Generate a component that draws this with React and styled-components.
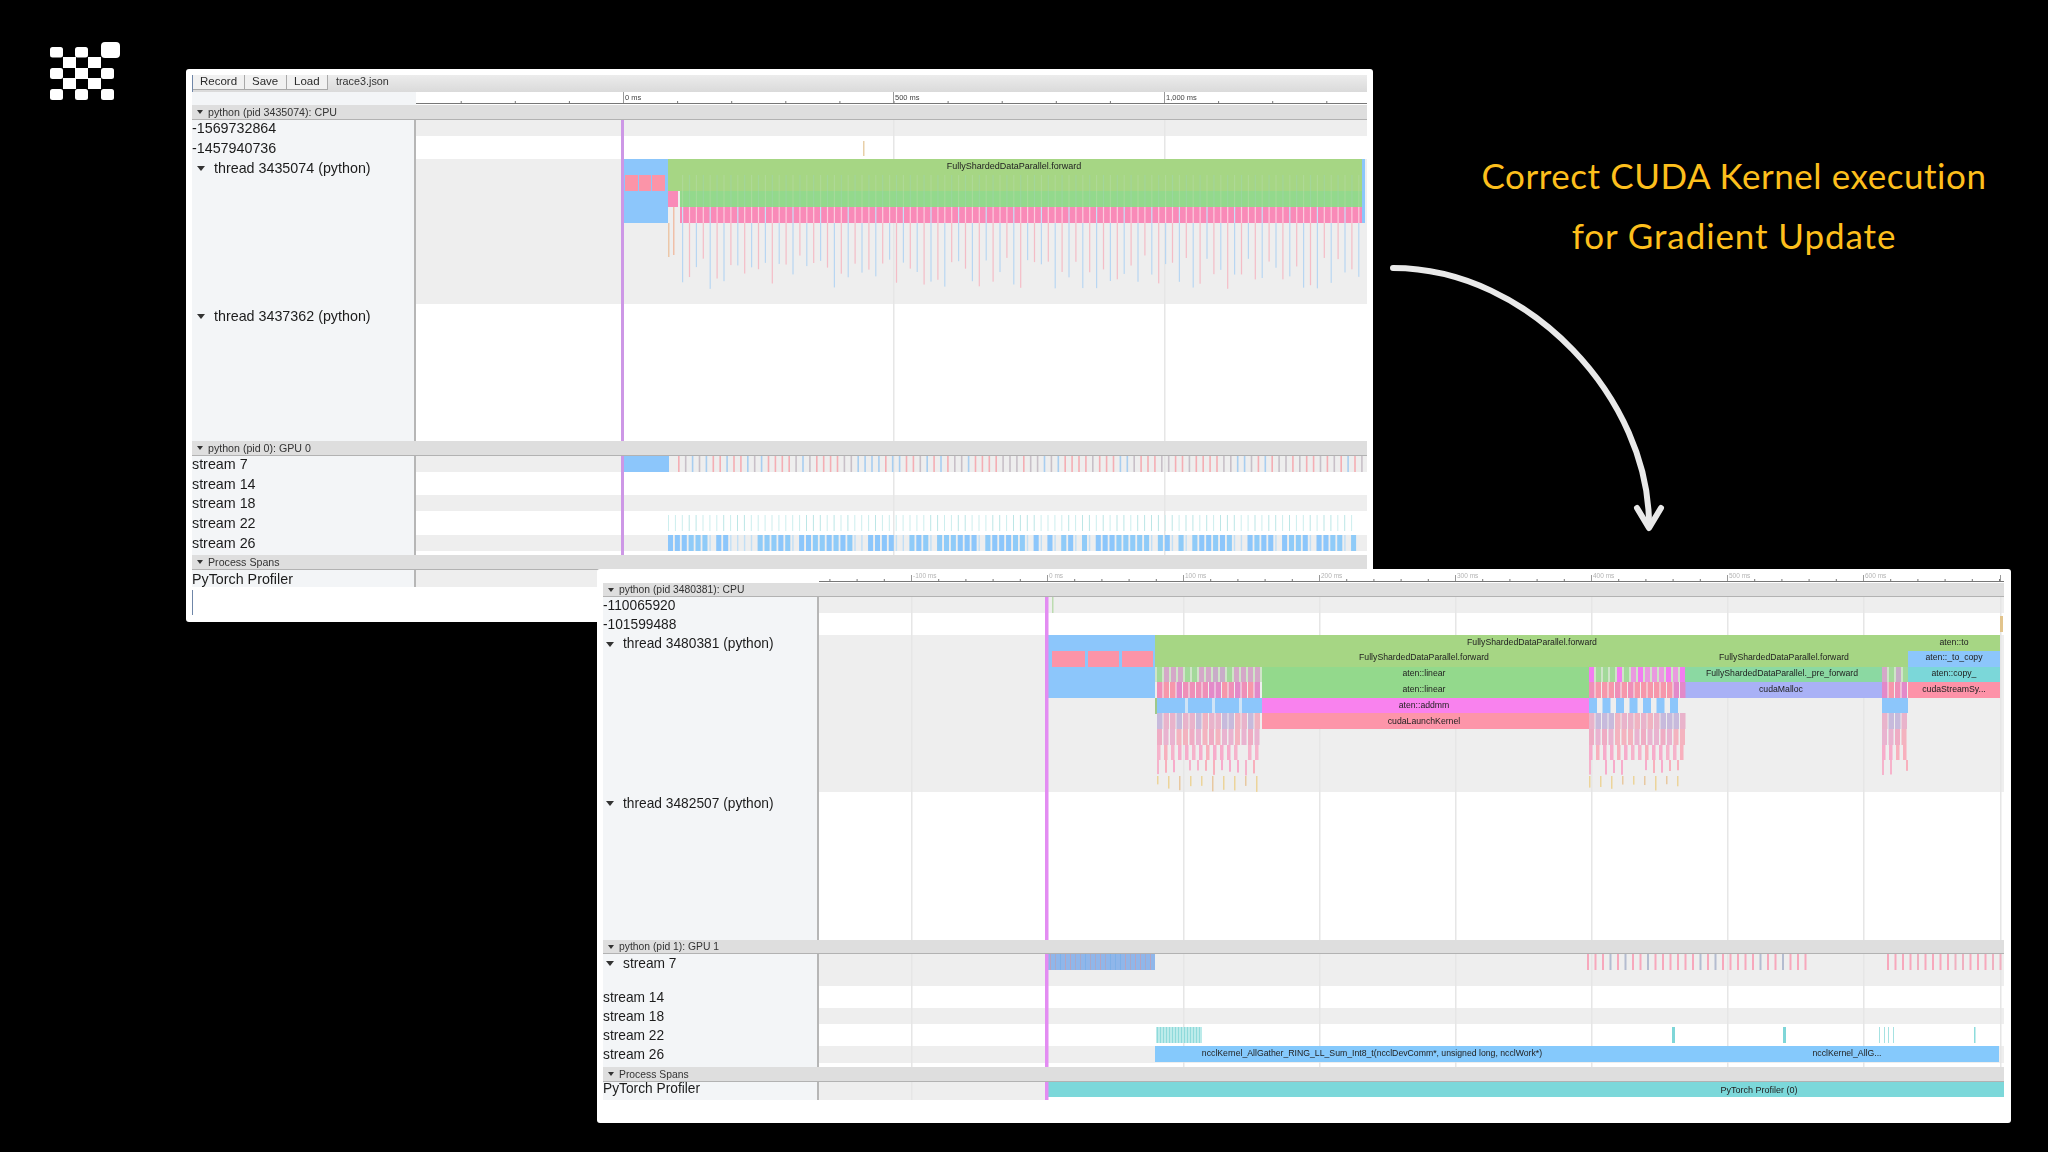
import React from "react";
import styled, { createGlobalStyle } from "styled-components";

const GlobalStyle = createGlobalStyle`
  html, body { margin: 0; padding: 0; background: #000; }
  body { font-family: "Liberation Sans", Arial, sans-serif; }
`;

const Stage = styled.div`
  position: relative;
  width: 2048px;
  height: 1152px;
  background: #000;
  overflow: hidden;
`;

const LogoArt = styled.svg`
  position: absolute;
  left: 50px;
  top: 42px;
`;

const ArrowArt = styled.svg`
  position: absolute;
  left: 1380px;
  top: 260px;
`;

const Caption = styled.div`
  position: absolute;
  left: 1434px;
  top: 145px;
  width: 600px;
  color: #fdbf1c;
  font-family: "Lato", "Open Sans", sans-serif;
  font-size: 35px;
  line-height: 60px;
  text-align: center;
`;

const CaptionLine = styled.div`
  white-space: nowrap;
  letter-spacing: ${(p) => p.$ls}px;
`;

const Window = styled.section`
  position: absolute;
  left: ${(p) => p.$left}px;
  top: ${(p) => p.$top}px;
  width: ${(p) => p.$width}px;
  height: ${(p) => p.$height}px;
  box-sizing: border-box;
  padding: ${(p) => p.$pad};
  background: #fff;
  border-radius: 3px;
  display: flex;
  flex-direction: column;
  overflow: hidden;
  filter: blur(0.45px);
`;

const Toolbar = styled.div`
  height: 17px;
  flex: none;
  display: flex;
  align-items: stretch;
  background: linear-gradient(#ececec, #dadada);
  border-left: 1px solid #6f86a8;
  font-size: 11.5px;
  color: #2b2b2b;
`;

const ToolButton = styled.div`
  width: ${(p) => p.$w}px;
  box-sizing: border-box;
  padding-left: ${(p) => p.$pad}px;
  height: 15px;
  line-height: 13px;
  background: #f1f1f1;
  border-right: 1px solid #a9a9a9;
  border-bottom: 1px solid #a9a9a9;
`;

const FileName = styled.div`
  padding-left: 8px;
  line-height: 13px;
  font-size: 10.8px;
  color: #333;
`;

const RulerRow = styled.div`
  height: ${(p) => p.$h}px;
  flex: none;
  display: flex;
`;

const RulerGutter = styled.div`
  width: ${(p) => p.$w}px;
  flex: none;
  background: ${(p) => p.$bg};
`;

const ProcessHeader = styled.div`
  height: ${(p) => p.$h}px;
  flex: none;
  box-sizing: border-box;
  display: flex;
  align-items: center;
  background: #dedede;
  border-bottom: 1px solid #b2b2b2;
  padding-left: 5px;
  font-size: ${(p) => p.$fs}px;
  color: #333;
  white-space: nowrap;
`;

const HeaderCaret = styled.span`
  width: 0;
  height: 0;
  margin-right: 5px;
  border-left: 3px solid transparent;
  border-right: 3px solid transparent;
  border-top: 4px solid #333;
`;

const Row = styled.div`
  height: ${(p) => p.$h}px;
  flex: none;
  display: flex;
`;

const RowLabel = styled.div`
  box-sizing: border-box;
  display: flex;
  align-items: center;
  height: ${(p) => p.$h}px;
  font-size: ${(p) => p.$fs}px;
  color: #1c1c1c;
  white-space: nowrap;
  padding-left: ${(p) => p.$indent}px;
`;

const LabelCell = styled.div`
  width: ${(p) => p.$w}px;
  flex: none;
  box-sizing: border-box;
  background: #f3f5f7;
  border-right: 2px solid #b6b6b6;
`;

const RowCaret = styled.span`
  width: 0;
  height: 0;
  flex: none;
  margin-right: 9px;
  margin-top: 1px;
  border-left: 4px solid transparent;
  border-right: 4px solid transparent;
  border-top: 5px solid #333;
`;

const TrackBox = styled.div`
  flex: 1;
  min-width: 0;
  background: ${(p) => (p.$shade ? "#eeeeee" : "#ffffff")};
`;

const TrackArt = styled.svg`
  display: block;
`;

const SliceLabel = styled.text`
  font-family: "Liberation Sans", Arial, sans-serif;
  font-size: ${(p) => p.$fs}px;
  fill: #222;
  text-anchor: middle;
`;

const TickLabel = styled.text`
  font-family: "Liberation Sans", Arial, sans-serif;
  font-size: ${(p) => p.$fs}px;
  fill: ${(p) => p.$fill};
`;

const InputCaret = styled.div`
  width: 1px;
  height: 25px;
  margin-top: 3px;
  background: #6f86a8;
`;

const rnd = (i) => {
  const v = Math.sin(i * 12.9898 + 4.1) * 43758.5453;
  return v - Math.floor(v);
};

const BLUE = "#8cc6fb";
const PINK = "#fb94a8";
const HOT = "#f98ab8";
const GREEN = "#a6d684";
const GREEN2 = "#93d98c";

function Stripes({ from, to, y, h, step = 7, w = 2, colors, seed = 1, skip = 0, opacity = 1, vary = 0 }) {
  const out = [];
  let n = 0;
  for (let x = from; x < to - w / 2; x += step, n++) {
    const r = rnd(seed * 31 + n);
    if (r < skip) continue;
    const c = colors[Math.floor(rnd(seed * 7 + n * 3) * colors.length)];
    const hh = vary ? h - rnd(seed + n * 5) * vary : h;
    out.push(<rect key={n} x={x} y={y} width={w} height={hh} fill={c} opacity={opacity} />);
  }
  return <>{out}</>;
}

function Track({ x0, w, top, h, grid, marker, markerW, markerColor, children }) {
  return (
    <TrackArt width={w} height={h} viewBox={`${x0} ${top} ${w} ${h}`}>
      {grid.map((g) => (
        <rect key={g} x={g} y={top} width={1.5} height={h} fill="#e6e6e6" />
      ))}
      {children}
      {marker && <rect x={marker} y={top} width={markerW} height={h} fill={markerColor} />}
    </TrackArt>
  );
}

function Ruler({ x0, w, h, majors, minorStep, labels, labelSize, labelFill, lineY, majorH }) {
  const ticks = [];
  for (let x = majors[0] - minorStep * 8; x < x0 + w; x += minorStep) {
    if (x >= x0) ticks.push(x);
  }
  return (
    <TrackArt width={w} height={h} viewBox={`${x0} 0 ${w} ${h}`}>
      <rect x={x0} y={lineY} width={w} height={1} fill="#777" />
      {ticks.map((x, i) => (
        <rect key={i} x={x} y={lineY - 2} width={1} height={3} fill="#777" />
      ))}
      {majors.map((x, i) => (
        <g key={x}>
          <rect x={x} y={lineY - majorH} width={1} height={majorH} fill="#999" />
          <TickLabel x={x + 2} y={lineY - 3} $fs={labelSize} $fill={labelFill}>{labels[i]}</TickLabel>
        </g>
      ))}
    </TrackArt>
  );
}

const LW1 = 224;
const TW1 = 951;
const X1 = 416;
const G1 = [893, 1164];

function Line1({ top, h, shade, label, caret, rowH, children, marker = true }) {
  return (
    <Row $h={h}>
      <LabelCell $w={LW1}>
        <RowLabel $h={rowH || h} $fs={14.3} $indent={caret ? 5 : 0}>
          {caret && <RowCaret />}
          {label}
        </RowLabel>
      </LabelCell>
      <TrackBox $shade={shade}>
        <Track x0={X1} w={TW1} top={top} h={h} grid={G1} marker={marker ? 621 : 0} markerW={3} markerColor="#cd97e6">
          {children}
        </Track>
      </TrackBox>
    </Row>
  );
}

const LW2 = 216;
const TW2 = 1185;
const X2 = 819;
const G2 = [911, 1183, 1319, 1455, 1591, 1727, 1863, 2000];

function Line2({ top, h, shade, label, caret, rowH, children }) {
  return (
    <Row $h={h}>
      <LabelCell $w={LW2}>
        <RowLabel $h={rowH || h} $fs={13.75} $indent={caret ? 3 : 0}>
          {caret && <RowCaret />}
          {label}
        </RowLabel>
      </LabelCell>
      <TrackBox $shade={shade}>
        <Track x0={X2} w={TW2} top={top} h={h} grid={G2} marker={1045} markerW={3.5} markerColor="#e38cf2">
          {children}
        </Track>
      </TrackBox>
    </Row>
  );
}

function Thread1() {
  const drops = [];
  let n = 0;
  for (let x = 682; x < 1360; x += 6.9, n++) {
    const blue = n % 2 === 0;
    const len = 32 + rnd(n + 3) * 34;
    drops.push(
      <g key={n}>
        <rect x={x} y={175} width={1.2} height={32} fill={blue ? "#b5dca8" : "#9fd6b0"} opacity={0.5} />
        <rect x={x} y={207} width={1.2} height={16} fill={n % 4 === 0 ? "#c8e0f8" : "#fcccde"} />
        <rect x={x} y={223} width={1.2} height={len} fill={blue ? "#b8d6f2" : "#f4bcc6"} />
      </g>
    );
  }
  return (
    <>
      <rect x={623} y={159} width={45} height={64} fill={BLUE} />
      <rect x={625} y={175} width={13} height={16} fill={PINK} />
      <rect x={639} y={175} width={12} height={16} fill={PINK} />
      <rect x={652} y={175} width={13} height={16} fill={PINK} />
      <rect x={668} y={159} width={694} height={32} fill={GREEN} />
      <rect x={668} y={191} width={10} height={16} fill={HOT} />
      <rect x={680} y={191} width={682} height={16} fill={GREEN2} />
      <rect x={680} y={207} width={682} height={16} fill={HOT} />
      <rect x={1362} y={159} width={3} height={64} fill={BLUE} />
      {drops}
      <rect x={668} y={223} width={1.5} height={34} fill="#ecc7a8" />
      <rect x={673} y={207} width={1.5} height={48} fill="#f0bfa8" />
      <SliceLabel x={1014} y={169} $fs={9}>FullyShardedDataParallel.forward</SliceLabel>
    </>
  );
}

function Thread2() {
  const T = [635, 651, 667, 682, 698, 713, 729, 745, 760, 776];
  const regions = [
    [1157, 1262],
    [1589, 1685],
    [1882, 1908],
  ];
  const pinkset = ["#f9a4b4", "#f8a0c4", "#f7a8c4"];
  return (
    <>
      <rect x={1048} y={635} width={107} height={63} fill={BLUE} />
      <rect x={1052} y={651} width={33} height={16} fill={PINK} />
      <rect x={1088} y={651} width={31} height={16} fill={PINK} />
      <rect x={1122} y={651} width={31} height={16} fill={PINK} />
      <rect x={1155} y={635} width={753} height={32} fill={GREEN} />
      <rect x={1155} y={667} width={753} height={15} fill="#cfe4c8" />
      <rect x={1155} y={698} width={2} height={16} fill="#9ec98a" />

      <rect x={1262} y={667} width={327} height={31} fill={GREEN2} />
      <rect x={1262} y={698} width={327} height={15} fill="#f982ee" />
      <rect x={1262} y={713} width={327} height={16} fill="#fd95a9" />
      <rect x={1681} y={667} width={201} height={15} fill="#8bd9a2" />
      <rect x={1681} y={682} width={201} height={16} fill="#a9b1f6" />

      {regions.map(([a, b], i) => (
        <g key={a}>
          <Stripes from={a} to={b} y={T[2]} h={15} step={7} w={5} colors={i === 1 ? ["#f27cf0", "#a3d99a", "#e99adf"] : ["#d4a8c8", "#a3d99a", "#c8acc8"]} seed={i + 2} />
          <Stripes from={a} to={b} y={T[3]} h={16} step={6.5} w={5.5} colors={["#ef8fb8", "#e389c9", "#f697ab"]} seed={i + 5} />
          {i === 0 && <rect x={1157} y={T[4]} width={105} height={15} fill={BLUE} />}
          {i === 0 && <Stripes from={1185} to={1262} y={T[4]} h={15} step={27} w={3} colors={["#cfe4f6"]} seed={9} />}
          {i === 1 && <Stripes from={a} to={b} y={T[4]} h={15} step={13.5} w={8} colors={[BLUE]} seed={8} />}
          {i === 2 && <rect x={a} y={T[4]} width={b - a} height={15} fill={BLUE} />}
          <Stripes from={a} to={b} y={T[5]} h={16} step={6.5} w={5.5} colors={["#f0a8ba", "#e8a8c4", "#c0b0d8"]} seed={i + 11} opacity={0.85} />
          <Stripes from={a} to={b} y={T[6]} h={16} step={6.5} w={5} colors={["#efa0bc", "#e8a8ca", "#f4a8b6"]} seed={i + 14} opacity={0.85} />
          <Stripes from={a} to={b} y={T[7]} h={15} step={7} w={3.5} colors={pinkset} seed={i + 17} skip={0.05} opacity={0.85} />
          <Stripes from={a} to={b} y={T[8]} h={16} step={8} w={2} colors={pinkset} seed={i + 21} skip={0.2} vary={6} opacity={0.85} />
          {i !== 2 && <Stripes from={a} to={b} y={T[9]} h={16} step={11} w={1.5} colors={["#ecd49a", "#e8c8a0"]} seed={i + 25} vary={8} />}
        </g>
      ))}
      <rect x={1908} y={635} width={92} height={16} fill={GREEN} />
      <rect x={1908} y={651} width={92} height={16} fill={BLUE} />
      <rect x={1908} y={667} width={92} height={15} fill="#7bd7d9" />
      <rect x={1908} y={682} width={92} height={16} fill="#fd92a8" />

      <SliceLabel x={1532} y={645} $fs={8.7}>FullyShardedDataParallel.forward</SliceLabel>
      <SliceLabel x={1424} y={660} $fs={8.7}>FullyShardedDataParallel.forward</SliceLabel>
      <SliceLabel x={1784} y={660} $fs={8.7}>FullyShardedDataParallel.forward</SliceLabel>
      <SliceLabel x={1424} y={676} $fs={8.7}>aten::linear</SliceLabel>
      <SliceLabel x={1424} y={692} $fs={8.7}>aten::linear</SliceLabel>
      <SliceLabel x={1424} y={707.5} $fs={8.7}>aten::addmm</SliceLabel>
      <SliceLabel x={1424} y={723.5} $fs={8.7}>cudaLaunchKernel</SliceLabel>
      <SliceLabel x={1782} y={676} $fs={8.7}>FullyShardedDataParallel._pre_forward</SliceLabel>
      <SliceLabel x={1781} y={692} $fs={8.7}>cudaMalloc</SliceLabel>
      <SliceLabel x={1954} y={645} $fs={8.7}>aten::to</SliceLabel>
      <SliceLabel x={1954} y={660} $fs={8.7}>aten::_to_copy</SliceLabel>
      <SliceLabel x={1954} y={676} $fs={8.7}>aten::copy_</SliceLabel>
      <SliceLabel x={1954} y={692} $fs={8.7}>cudaStreamSy...</SliceLabel>
    </>
  );
}

function TraceOne() {
  return (
    <Window $left={186} $top={69} $width={1187} $height={553} $pad="6px 6px 0 6px">
      <Toolbar>
        <ToolButton $w={52} $pad={7}>Record</ToolButton>
        <ToolButton $w={42} $pad={7}>Save</ToolButton>
        <ToolButton $w={41} $pad={7}>Load</ToolButton>
        <FileName>trace3.json</FileName>
      </Toolbar>
      <RulerRow $h={13}>
        <RulerGutter $w={LW1} $bg="#f3f5f7" />
        <Ruler
          x0={X1}
          w={TW1}
          h={13}
          lineY={11}
          majorH={11}
          majors={[623, 893, 1164]}
          minorStep={54.1}
          labels={["0 ms", "500 ms", "1,000 ms"]}
          labelSize={7.5}
          labelFill="#444"
        />
      </RulerRow>
      <ProcessHeader $h={15} $fs={10.65}>
        <HeaderCaret />
        python (pid 3435074): CPU
      </ProcessHeader>
      <Line1 top={120} h={16} shade label="-1569732864" />
      <Line1 top={136} h={23} label="-1457940736">
        <rect x={863} y={141} width={1.5} height={15} fill="#e8cfa8" />
      </Line1>
      <Line1 top={159} h={145} shade caret rowH={18} label="thread 3435074 (python)">
        <Thread1 />
      </Line1>
      <Line1 top={304} h={137} caret rowH={24} label="thread 3437362 (python)" />
      <ProcessHeader $h={15} $fs={10.65}>
        <HeaderCaret />
        python (pid 0): GPU 0
      </ProcessHeader>
      <Line1 top={456} h={16} shade label="stream 7">
        <rect x={623} y={456} width={46} height={16} fill={BLUE} />
        <Stripes from={678} to={1366} y={456} h={16} step={6.9} w={1.6} colors={["#f4aeb4", "#f4aeb4", "#a8cef0", "#c8c0c8"]} seed={41} />
      </Line1>
      <Line1 top={472} h={23} label="stream 14" />
      <Line1 top={495} h={16} shade label="stream 18" />
      <Line1 top={511} h={24} label="stream 22">
        <Stripes from={668} to={1358} y={515} h={16} step={6.9} w={1} colors={["#bce6e6", "#cdeeee"]} seed={43} />
      </Line1>
      <Line1 top={535} h={16} shade label="stream 26">
        <Stripes from={668} to={1358} y={535} h={16} step={6.9} w={1.4} colors={["#c2dff5"]} seed={48} />
        <Stripes from={668} to={1358} y={535} h={16} step={6.9} w={5} colors={[BLUE, "#8fcbf8"]} seed={47} skip={0.25} />
      </Line1>
      <Line1 top={551} h={4} />
      <ProcessHeader $h={15} $fs={10.65}>
        <HeaderCaret />
        Process Spans
      </ProcessHeader>
      <Line1 top={570} h={17} shade label="PyTorch Profiler" marker={false} />
      <InputCaret />
    </Window>
  );
}

function TraceTwo() {
  return (
    <Window $left={597} $top={569} $width={1414} $height={554} $pad="0 7px 0 6px">
      <RulerRow $h={14}>
        <RulerGutter $w={LW2} $bg="#ffffff" />
        <Ruler
          x0={X2}
          w={TW2}
          h={14}
          lineY={12}
          majorH={6}
          majors={[911, 1047, 1183, 1319, 1455, 1591, 1727, 1863, 2000]}
          minorStep={27.2}
          labels={["-100 ms", "0 ms", "100 ms", "200 ms", "300 ms", "400 ms", "500 ms", "600 ms", ""]}
          labelSize={6.5}
          labelFill="#b4b4b4"
        />
      </RulerRow>
      <ProcessHeader $h={14} $fs={10.35}>
        <HeaderCaret />
        python (pid 3480381): CPU
      </ProcessHeader>
      <Line2 top={597} h={16} shade label="-110065920">
        <rect x={1052} y={597} width={1.5} height={16} fill="#bcdcb0" />
      </Line2>
      <Line2 top={613} h={22} label="-101599488">
        <rect x={2000} y={616} width={3} height={16} fill="#e2c48c" />
      </Line2>
      <Line2 top={635} h={157} shade caret rowH={17} label="thread 3480381 (python)">
        <Thread2 />
      </Line2>
      <Line2 top={792} h={148} caret rowH={22} label="thread 3482507 (python)" />
      <ProcessHeader $h={14} $fs={10.35}>
        <HeaderCaret />
        python (pid 1): GPU 1
      </ProcessHeader>
      <Line2 top={954} h={32} shade caret rowH={18} label="stream 7">
        <rect x={1048} y={954} width={107} height={16} fill="#8fb6ea" />
        <Stripes from={1050} to={1155} y={954} h={16} step={5} w={1} colors={["#a9a8c8", "#b7a4c0", "#7fb0e8"]} seed={61} />
        <Stripes from={1587} to={1810} y={954} h={16} step={7.5} w={2} colors={["#f7a8bc", "#f7a8bc", "#f7a8bc", "#b4bcd0"]} seed={63} />
        <Stripes from={1887} to={2004} y={954} h={16} step={7.5} w={2} colors={["#f7a8bc", "#f7a8bc", "#f0b0c0"]} seed={65} />
      </Line2>
      <Line2 top={986} h={22} label="stream 14" />
      <Line2 top={1008} h={16} shade label="stream 18" />
      <Line2 top={1024} h={22} label="stream 22">
        <rect x={1156} y={1027} width={46} height={16} fill="#bcebea" />
        <Stripes from={1157} to={1202} y={1027} h={16} step={3} w={1} colors={["#8fdadb"]} seed={67} />
        <rect x={1672} y={1027} width={3} height={16} fill="#7fd6d8" />
        <rect x={1783} y={1027} width={3} height={16} fill="#7fd6d8" />
        <rect x={1879} y={1027} width={1} height={16} fill="#a6e2e2" />
        <rect x={1884} y={1027} width={1} height={16} fill="#a6e2e2" />
        <rect x={1888} y={1027} width={1} height={16} fill="#a6e2e2" />
        <rect x={1893} y={1027} width={1} height={16} fill="#a6e2e2" />
        <rect x={1974} y={1027} width={1.5} height={16} fill="#8ddcdc" />
      </Line2>
      <Line2 top={1046} h={17} shade label="stream 26">
        <rect x={1155} y={1046} width={844} height={16} fill="#85c9fc" />
        <SliceLabel x={1372} y={1056} $fs={8.7}>ncclKernel_AllGather_RING_LL_Sum_Int8_t(ncclDevComm*, unsigned long, ncclWork*)</SliceLabel>
        <SliceLabel x={1847} y={1056} $fs={8.7}>ncclKernel_AllG...</SliceLabel>
      </Line2>
      <Line2 top={1063} h={4} />
      <ProcessHeader $h={15} $fs={10.35}>
        <HeaderCaret />
        Process Spans
      </ProcessHeader>
      <Line2 top={1082} h={18} rowH={13} label="PyTorch Profiler" shade>
        <rect x={1048} y={1082} width={956} height={15} fill="#7cd8da" />
        <rect x={1048} y={1097} width={956} height={3} fill="#ffffff" />
        <SliceLabel x={1759} y={1092.5} $fs={9}>PyTorch Profiler (0)</SliceLabel>
      </Line2>
    </Window>
  );
}

function Logo() {
  const rounded = [
    [0, 5], [25, 5],
    [0, 26], [51, 26],
    [0, 47], [25, 47], [51, 47],
  ];
  const square = [
    [13, 15], [38, 15],
    [25, 26],
    [13, 36], [38, 36],
  ];
  return (
    <LogoArt width={70} height={60} viewBox="0 0 70 60">
      {rounded.map(([x, y]) => (
        <rect key={`r${x}-${y}`} x={x} y={y} width={13} height={y === 5 ? 10.5 : 11} rx={2.5} fill="#fff" />
      ))}
      {square.map(([x, y]) => (
        <rect key={`s${x}-${y}`} x={x} y={y} width={13} height={11} fill="#fff" />
      ))}
      <rect x={51} y={0} width={19} height={16} rx={4} fill="#fff" />
    </LogoArt>
  );
}

function Arrow() {
  return (
    <ArrowArt width={300} height={285} viewBox="1380 260 300 285" fill="none" stroke="#e9e9e9" strokeLinecap="round" strokeLinejoin="round">
      <path d="M1393 268 C1530 268 1650 400 1649 526" strokeWidth={6} />
      <path d="M1637 508 L1649 528 L1661 508" strokeWidth={6} />
    </ArrowArt>
  );
}

export default function App() {
  return (
    <Stage>
      <GlobalStyle />
      <Logo />
      <TraceOne />
      <TraceTwo />
      <Caption>
        <CaptionLine $ls={0.55}>Correct CUDA Kernel execution</CaptionLine>
        <CaptionLine $ls={0.9}>for Gradient Update</CaptionLine>
      </Caption>
      <Arrow />
    </Stage>
  );
}
